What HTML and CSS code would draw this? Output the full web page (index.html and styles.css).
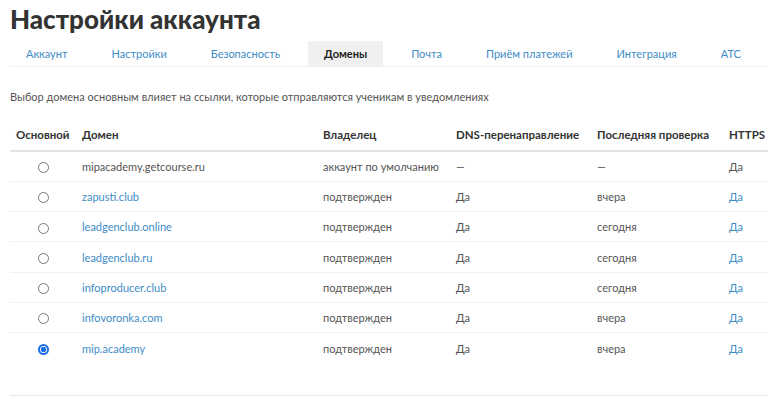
FILE: index.html
```html
<!DOCTYPE html>
<html lang="ru">
<head>
    <meta charset="UTF-8">
    <meta name="viewport" content="width=device-width, initial-scale=1.0">
    <title>Настройки аккаунта</title>
    <link rel="stylesheet" href="styles.css">
</head>
<body>
    <div class="page">
        <h1 class="page-title">Настройки аккаунта</h1>

        <ul class="tabs">
            <li class="tab"><a href="#">Аккаунт</a></li>
            <li class="tab"><a href="#">Настройки</a></li>
            <li class="tab"><a href="#">Безопасность</a></li>
            <li class="tab active"><a href="#">Домены</a></li>
            <li class="tab"><a href="#">Почта</a></li>
            <li class="tab"><a href="#">Приём платежей</a></li>
            <li class="tab"><a href="#">Интеграция</a></li>
            <li class="tab"><a href="#">АТС</a></li>
        </ul>

        <p class="hint">Выбор домена основным влияет на ссылки, которые отправляются ученикам в уведомлениях</p>

        <div class="domains">
            <table class="domain-table">
                <thead>
                    <tr>
                        <th class="col-main">Основной</th>
                        <th class="col-domain">Домен</th>
                        <th class="col-owner">Владелец</th>
                        <th class="col-dns">DNS-перенаправление</th>
                        <th class="col-check">Последняя проверка</th>
                        <th class="col-https">HTTPS</th>
                    </tr>
                </thead>
                <tbody>
                    <tr>
                        <td class="col-main"><input type="radio" name="main"></td>
                        <td>mipacademy.getcourse.ru</td>
                        <td>аккаунт по умолчанию</td>
                        <td>—</td>
                        <td>—</td>
                        <td>Да</td>
                    </tr>
                    <tr>
                        <td class="col-main"><input type="radio" name="main"></td>
                        <td><a href="#">zapusti.club</a></td>
                        <td>подтвержден</td>
                        <td>Да</td>
                        <td>вчера</td>
                        <td><a href="#">Да</a></td>
                    </tr>
                    <tr>
                        <td class="col-main"><input type="radio" name="main"></td>
                        <td><a href="#">leadgenclub.online</a></td>
                        <td>подтвержден</td>
                        <td>Да</td>
                        <td>сегодня</td>
                        <td><a href="#">Да</a></td>
                    </tr>
                    <tr>
                        <td class="col-main"><input type="radio" name="main"></td>
                        <td><a href="#">leadgenclub.ru</a></td>
                        <td>подтвержден</td>
                        <td>Да</td>
                        <td>сегодня</td>
                        <td><a href="#">Да</a></td>
                    </tr>
                    <tr>
                        <td class="col-main"><input type="radio" name="main"></td>
                        <td><a href="#">infoproducer.club</a></td>
                        <td>подтвержден</td>
                        <td>Да</td>
                        <td>сегодня</td>
                        <td><a href="#">Да</a></td>
                    </tr>
                    <tr>
                        <td class="col-main"><input type="radio" name="main"></td>
                        <td><a href="#">infovoronka.com</a></td>
                        <td>подтвержден</td>
                        <td>Да</td>
                        <td>вчера</td>
                        <td><a href="#">Да</a></td>
                    </tr>
                    <tr>
                        <td class="col-main"><input type="radio" name="main" checked></td>
                        <td><a href="#">mip.academy</a></td>
                        <td>подтвержден</td>
                        <td>Да</td>
                        <td>вчера</td>
                        <td><a href="#">Да</a></td>
                    </tr>
                </tbody>
            </table>
        </div>
    </div>
</body>
</html>
```

FILE: styles.css
```css
* {
    box-sizing: border-box;
    margin: 0;
    padding: 0;
}

body {
    font-family: 'Lato', 'Noto Sans', sans-serif;
    background: #fff;
    color: #555;
    font-size: 11px;
    white-space: nowrap;
}

a {
    color: #3d8cc6;
    text-decoration: none;
}

.page {
    padding: 0 2px 0 10px;
}

.page-title {
    font-size: 26px;
    font-weight: 900;
    color: #333;
    line-height: 30px;
    padding-top: 4px;
    margin-bottom: 7px;
}

.tabs {
    list-style: none;
    display: flex;
    gap: 12px;
    border-bottom: 1px solid #f0f0f0;
}

.tab a {
    display: block;
    padding: 0 16px;
    height: 25px;
    line-height: 25px;
    font-size: 11px;
}

.tab.active a {
    background: #f0f0f0;
    color: #222;
    font-weight: 700;
}

.hint {
    margin-top: 22px;
    line-height: 16px;
    color: #555;
}

.domains {
    margin-top: 14px;
    border-bottom: 1px solid #e8e8e8;
    padding-bottom: 32px;
}

.domain-table {
    width: 100%;
    border-collapse: collapse;
    table-layout: fixed;
}

.domain-table th {
    text-align: left;
    font-weight: 700;
    font-size: 11.5px;
    color: #333;
    padding: 0 6px;
    height: 32px;
    border-bottom: 2px solid #e4e4e4;
}

.domain-table td {
    padding: 0 6px;
    height: 30.3px;
    border-bottom: 1px solid #f0f0f0;
}

.domain-table tbody tr:last-child td {
    border-bottom: none;
}

.col-main {
    width: 66px;
}

.domain-table td.col-main {
    text-align: center;
}

.col-domain {
    width: 241px;
}

.col-owner {
    width: 133px;
}

.col-dns {
    width: 141px;
}

.col-check {
    width: 132px;
}

.domain-table input[type="radio"] {
    appearance: none;
    width: 11px;
    height: 11px;
    border: 1px solid #777;
    border-radius: 50%;
    vertical-align: middle;
    display: inline-block;
}

.domain-table input[type="radio"]:checked {
    border: 2px solid #1a6ee8;
    background: radial-gradient(circle, #1a6ee8 0 2.5px, #fff 3px);
}
```
